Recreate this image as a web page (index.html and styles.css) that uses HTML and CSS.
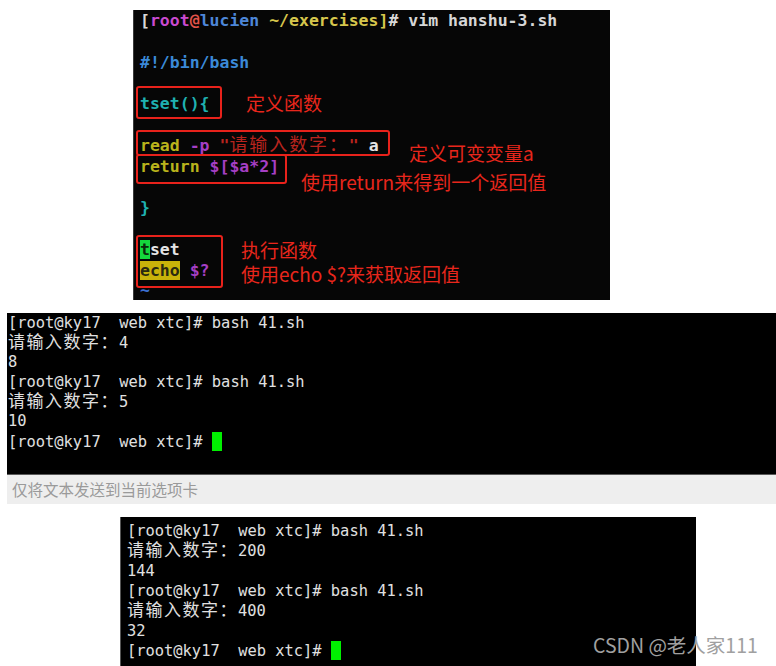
FILE: index.html
```html
<!DOCTYPE html>
<html lang="zh-CN">
<head>
    <meta charset="UTF-8">
    <meta name="viewport" content="width=device-width, initial-scale=1.0">
    <title>shell 函数返回值</title>
    <link rel="stylesheet" href="styles.css">
</head>
<body>

    <!-- vim 截图 + 标注 -->
    <div class="vim">
        <div class="line"><span class="c-br">[</span><span class="c-user">root</span><span class="c-at">@</span><span class="c-host">lucien</span> <span class="c-path">~/exercises]</span><span class="c-br">#</span> vim hanshu-3.sh</div>
        <div class="line"> </div>
        <div class="line c-blue">#!/bin/bash</div>
        <div class="line"> </div>
        <div class="line c-teal">tset(){</div>
        <div class="line"> </div>
        <div class="line"><span class="c-olive">read</span> <span class="c-purple">-p</span> <span class="c-red">"<span class="cjk">请输入数字：</span>"</span> <span class="c-white">a</span></div>
        <div class="line"><span class="c-olive">return</span> <span class="c-purple">$[$a*2]</span></div>
        <div class="line"> </div>
        <div class="line c-teal">}</div>
        <div class="line"> </div>
        <div class="line"><span class="cursor-t">t</span><span class="c-white">set</span></div>
        <div class="line"><span class="hl-yellow">echo</span> <span class="c-purple">$?</span></div>
        <div class="line c-tilde">~</div>

        <div class="box box-def"></div>
        <div class="box box-read"></div>
        <div class="box box-return"></div>
        <div class="box box-call"></div>

        <div class="note note-def">定义函数</div>
        <div class="note note-read">定义可变变量a</div>
        <div class="note note-return">使用return来得到一个返回值</div>
        <div class="note note-call">执行函数</div>
        <div class="note note-echo">使用echo $?来获取返回值</div>
    </div>

    <!-- 第一次运行 -->
    <div class="term term-wide">
        <div class="line">[root@ky17  web xtc]# bash 41.sh</div>
        <div class="line"><span class="cjk">请输入数字：</span>4</div>
        <div class="line">8</div>
        <div class="line">[root@ky17  web xtc]# bash 41.sh</div>
        <div class="line"><span class="cjk">请输入数字：</span>5</div>
        <div class="line">10</div>
        <div class="line">[root@ky17  web xtc]# <span class="block"></span></div>
    </div>
    <div class="sendbar">仅将文本发送到当前选项卡</div>

    <!-- 第二次运行 -->
    <div class="term term-small">
        <div class="line">[root@ky17  web xtc]# bash 41.sh</div>
        <div class="line"><span class="cjk">请输入数字：</span>200</div>
        <div class="line">144</div>
        <div class="line">[root@ky17  web xtc]# bash 41.sh</div>
        <div class="line"><span class="cjk">请输入数字：</span>400</div>
        <div class="line">32</div>
        <div class="line">[root@ky17  web xtc]# <span class="block"></span></div>
    </div>

    <div class="watermark">CSDN @老人家111</div>

</body>
</html>
```

FILE: styles.css
```css
/* 页面 */
body {
    margin: 0;
    background-color: #fff;
    position: relative;
    height: 666px;
    overflow: hidden;
    font-family: "DejaVu Sans Mono", "Noto Sans CJK SC", monospace;
}

.line {
    white-space: pre;
}

/* 中文在终端里占两格 */
.cjk {
    font-size: 17px;
    letter-spacing: 1.5px;
    line-height: 1;
}

/* vim 截图 */
.vim {
    position: relative;
    margin: 10px 0 0 133px;
    width: 477px;
    height: 290px;
    box-sizing: border-box;
    padding: 1px 0 0 6px;
    background-color: #060606;
    border-left: 1px solid #3a3a3a;
    color: #d6d6d6;
    font-size: 16.5px;
    font-weight: bold;
    line-height: 20.8px;
    overflow: hidden;
}

.vim .line {
    height: 20.8px;
}

.vim .cjk {
    font-size: 18px;
    letter-spacing: 1.9px;
    font-weight: normal;
}

.c-br { color: #d8d8d8; }
.c-user { color: #c94ad0; }
.c-at { color: #e2544a; }
.c-host { color: #4d86d8; }
.c-path { color: #d6c64c; }
.c-blue { color: #3b8ad8; }
.c-teal { color: #1fb1b1; }
.c-olive { color: #b9b31c; }
.c-purple { color: #a53fc4; }
.c-red { color: #b8241e; }
.c-white { color: #e4e4e4; }
.c-tilde { color: #3b6fd0; }

.cursor-t {
    background-color: #14d83c;
    color: #0a2a0a;
}

.hl-yellow {
    background-color: #c9b30a;
    color: #2a2a10;
}

/* 红色标注框 */
.box {
    position: absolute;
    border: 2px solid #e8221b;
    border-radius: 3px;
    box-sizing: border-box;
}

.box-def { left: 2px; top: 76px; width: 86px; height: 33px; }
.box-read { left: 2px; top: 120px; width: 254px; height: 26px; }
.box-return { left: 2px; top: 144px; width: 151px; height: 30px; }
.box-call { left: 2px; top: 225px; width: 87px; height: 53px; }

.note {
    position: absolute;
    color: #e8261c;
    font-family: "Noto Sans CJK SC", sans-serif;
    font-weight: normal;
    font-size: 19px;
    line-height: 20px;
    white-space: nowrap;
}

.note-def { left: 112px; top: 83px; }
.note-read { left: 275px; top: 133px; }
.note-return { left: 167px; top: 162px; }
.note-call { left: 107px; top: 230px; }
.note-echo { left: 107px; top: 254px; }

/* 终端 */
.term {
    background-color: #000;
    color: #e0e0e0;
    font-size: 15.4px;
    box-sizing: border-box;
}

.term-wide {
    margin: 13px 0 0 7px;
    height: 161px;
    padding: 1px 0 0 1px;
    line-height: 19.7px;
}

.term-wide .line {
    height: 19.7px;
}

.term-small {
    margin: 13px 0 0 120px;
    width: 576px;
    height: 160px;
    padding: 4px 0 0 6px;
    border-left: 1px solid #555;
    line-height: 20px;
}

.term-small .line {
    height: 20px;
}

.block {
    display: inline-block;
    width: 10px;
    height: 19px;
    background-color: #00f000;
    vertical-align: -4px;
}

.sendbar {
    margin-left: 7px;
    height: 29px;
    border-top: 1px solid #5a5a5a;
    background-color: #eeeeee;
    color: #9a9a9a;
    font-family: "Noto Sans CJK SC", sans-serif;
    font-size: 15.5px;
    line-height: 29px;
    padding-left: 5px;
}

.watermark {
    position: absolute;
    left: 593px;
    top: 632px;
    color: #a0a0a0;
    font-family: "Noto Sans CJK SC", sans-serif;
    font-size: 19.5px;
    line-height: 26px;
}
```
